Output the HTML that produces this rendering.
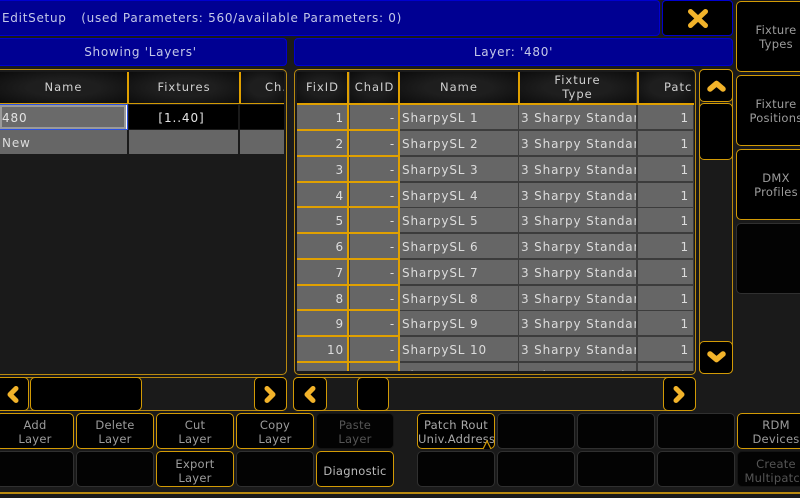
<!DOCTYPE html>
<html><head><meta charset="utf-8">
<style>
html,body{margin:0;padding:0;background:#1a1a1a;}
#p{position:relative;width:800px;height:498px;overflow:hidden;background:#1a1a1a;font-family:"DejaVu Sans",sans-serif;font-size:11.5px;color:#d8d8d8;letter-spacing:.25px;filter:blur(.3px);}
#p div{position:absolute;box-sizing:border-box;}
.blue{background:#000092;border:1px solid #0000d0;border-radius:4px;color:#c4c8e8;text-align:center;font-size:12px;letter-spacing:.72px;}
.pan{border:1px solid #b98a10;border-radius:5px;background:#1a1a1a;}
.btn{background:#000;border:1px solid #d29a05;border-radius:5px;text-align:center;color:#9c9c9c;line-height:14px;white-space:nowrap;overflow:hidden;display:flex;flex-direction:column;justify-content:center;}
.off{border-color:#303030;color:#555;background:#030303;}
.r1{padding-top:2px;}
.r2{padding-top:4px;}
.hd{background:radial-gradient(ellipse at center,#1e1e1e 40%,#0c0c0c 100%);text-align:center;color:#d0d0d0;line-height:13.5px;letter-spacing:1px;display:flex;flex-direction:column;justify-content:center;overflow:hidden;white-space:nowrap;}
.c{background:#666;color:#dcdcdc;height:24px;line-height:26px;white-space:nowrap;overflow:hidden;font-size:12px;letter-spacing:.85px;}
.n{text-align:right;padding-right:4px;}
.t{padding-left:2px;}
.y{background:#e0a000;}
svg{position:absolute;}
</style></head><body><div id="p">

<div class="blue" style="left:-6px;top:0;width:666px;height:36px;text-align:left;padding-left:7px;line-height:35px;white-space:pre;">EditSetup &nbsp;&nbsp;<span style="margin-left:1px">(used Parameters: 560/available Parameters: 0)</span></div>
<div class="blue" style="left:662px;top:0;width:71px;height:36px;background:#000;"></div>
<svg style="left:686px;top:7px" width="24" height="22" viewBox="0 0 24 22"><path d="M4.5 4.5L19.5 18.5M19.5 4.5L4.5 18.5" stroke="#f2b32a" stroke-width="5" stroke-linecap="round" fill="none"/></svg>

<div class="blue" style="left:-6px;top:38px;width:293px;height:28px;line-height:27px;">Showing 'Layers'</div>
<div class="blue" style="left:294px;top:38px;width:439px;height:28px;line-height:27px;">Layer: '480'</div>

<div class="btn" style="left:736px;top:1px;width:80px;height:71px;">Fixture<br>Types</div>
<div class="btn" style="left:736px;top:75px;width:80px;height:71px;">Fixture<br>Positions</div>
<div class="btn" style="left:736px;top:149px;width:80px;height:71px;">DMX<br>Profiles</div>
<div class="btn off" style="left:736px;top:223px;width:80px;height:71px;"></div>

<!-- left panel -->
<div class="pan" style="left:-6px;top:69px;width:293px;height:306px;"></div>
<div class="hd" style="left:0;top:72px;width:127px;height:31px;">Name</div>
<div class="y" style="left:127px;top:72px;width:2px;height:31px;"></div>
<div class="hd" style="left:129px;top:72px;width:110px;height:31px;">Fixtures</div>
<div class="y" style="left:239px;top:72px;width:2px;height:31px;"></div>
<div class="hd" style="left:241px;top:72px;width:43px;height:31px;padding-left:24px;align-items:flex-start;">Ch.</div>
<div class="y" style="left:0;top:103px;width:284px;height:1px;background:#d29a05;"></div>
<div style="left:0;top:104px;width:128px;height:26px;background:#fff;border:1px solid #2a50e0;border-left:none;"></div>
<div style="left:0;top:105px;width:126px;height:24px;background:#9a9a9a;"></div>
<div style="left:2px;top:107px;width:122px;height:20px;background:#6a6a6a;color:#e4e4e4;line-height:22px;font-size:12px;letter-spacing:.85px;">480</div>
<div style="left:129px;top:105px;width:109px;height:24px;background:#000;text-align:center;line-height:26px;color:#e4e4e4;font-size:12px;letter-spacing:.9px;padding-right:4px;">[1..40]</div>
<div style="left:240px;top:105px;width:44px;height:24px;background:#000;"></div>
<div class="c" style="left:0;top:130px;width:127px;padding-left:2px;">New</div>
<div class="c" style="left:129px;top:130px;width:109px;"></div>
<div class="c" style="left:240px;top:130px;width:44px;"></div>

<!-- right panel -->
<div class="pan" style="left:294px;top:69px;width:402px;height:306px;"></div>
<div style="left:297px;top:72px;width:397px;height:299px;overflow:hidden;background:#3c3c3c;">
<div class="hd" style="left:0;top:0;width:51px;height:31px;">FixID</div>
<div class="hd" style="left:53px;top:0;width:49px;height:31px;">ChaID</div>
<div class="hd" style="left:103px;top:0;width:118px;height:31px;">Name</div>
<div class="hd" style="left:222px;top:0;width:117px;height:31px;">Fixture<br>Type</div>
<div class="hd" style="left:341px;top:0;width:56px;height:31px;padding-left:26px;align-items:flex-start;">Patc</div>

<div class="c n" style="left:0;top:33px;width:51px;">1</div><div class="c n" style="left:53px;top:33px;width:49px;">-</div><div class="c t" style="left:103px;top:33px;width:118px;">SharpySL 1</div><div class="c t" style="left:222px;top:33px;width:117px;">3 Sharpy Standard</div><div class="c n" style="left:341px;top:33px;width:55px;">1</div>
<div class="c n" style="left:0;top:59px;width:51px;">2</div><div class="c n" style="left:53px;top:59px;width:49px;">-</div><div class="c t" style="left:103px;top:59px;width:118px;">SharpySL 2</div><div class="c t" style="left:222px;top:59px;width:117px;">3 Sharpy Standard</div><div class="c n" style="left:341px;top:59px;width:55px;">1</div>
<div class="c n" style="left:0;top:85px;width:51px;">3</div><div class="c n" style="left:53px;top:85px;width:49px;">-</div><div class="c t" style="left:103px;top:85px;width:118px;">SharpySL 3</div><div class="c t" style="left:222px;top:85px;width:117px;">3 Sharpy Standard</div><div class="c n" style="left:341px;top:85px;width:55px;">1</div>
<div class="c n" style="left:0;top:111px;width:51px;">4</div><div class="c n" style="left:53px;top:111px;width:49px;">-</div><div class="c t" style="left:103px;top:111px;width:118px;">SharpySL 4</div><div class="c t" style="left:222px;top:111px;width:117px;">3 Sharpy Standard</div><div class="c n" style="left:341px;top:111px;width:55px;">1</div>
<div class="c n" style="left:0;top:136px;width:51px;">5</div><div class="c n" style="left:53px;top:136px;width:49px;">-</div><div class="c t" style="left:103px;top:136px;width:118px;">SharpySL 5</div><div class="c t" style="left:222px;top:136px;width:117px;">3 Sharpy Standard</div><div class="c n" style="left:341px;top:136px;width:55px;">1</div>
<div class="c n" style="left:0;top:162px;width:51px;">6</div><div class="c n" style="left:53px;top:162px;width:49px;">-</div><div class="c t" style="left:103px;top:162px;width:118px;">SharpySL 6</div><div class="c t" style="left:222px;top:162px;width:117px;">3 Sharpy Standard</div><div class="c n" style="left:341px;top:162px;width:55px;">1</div>
<div class="c n" style="left:0;top:188px;width:51px;">7</div><div class="c n" style="left:53px;top:188px;width:49px;">-</div><div class="c t" style="left:103px;top:188px;width:118px;">SharpySL 7</div><div class="c t" style="left:222px;top:188px;width:117px;">3 Sharpy Standard</div><div class="c n" style="left:341px;top:188px;width:55px;">1</div>
<div class="c n" style="left:0;top:214px;width:51px;">8</div><div class="c n" style="left:53px;top:214px;width:49px;">-</div><div class="c t" style="left:103px;top:214px;width:118px;">SharpySL 8</div><div class="c t" style="left:222px;top:214px;width:117px;">3 Sharpy Standard</div><div class="c n" style="left:341px;top:214px;width:55px;">1</div>
<div class="c n" style="left:0;top:239px;width:51px;">9</div><div class="c n" style="left:53px;top:239px;width:49px;">-</div><div class="c t" style="left:103px;top:239px;width:118px;">SharpySL 9</div><div class="c t" style="left:222px;top:239px;width:117px;">3 Sharpy Standard</div><div class="c n" style="left:341px;top:239px;width:55px;">1</div>
<div class="c n" style="left:0;top:265px;width:51px;">10</div><div class="c n" style="left:53px;top:265px;width:49px;">-</div><div class="c t" style="left:103px;top:265px;width:118px;">SharpySL 10</div><div class="c t" style="left:222px;top:265px;width:117px;">3 Sharpy Standard</div><div class="c n" style="left:341px;top:265px;width:55px;">1</div>
<div class="c n" style="left:0;top:291px;width:51px;">11</div><div class="c n" style="left:53px;top:291px;width:49px;">-</div><div class="c t" style="left:103px;top:291px;width:118px;">SharpySL 11</div><div class="c t" style="left:222px;top:291px;width:117px;">3 Sharpy Standard</div><div class="c n" style="left:341px;top:291px;width:55px;">1</div>

<!-- yellow grid -->
<div class="y" style="left:50px;top:0;width:2px;height:300px;"></div>
<div class="y" style="left:101px;top:0;width:2px;height:300px;"></div>
<div class="y" style="left:221px;top:0;width:2px;height:31px;"></div>
<div class="y" style="left:340px;top:0;width:2px;height:31px;"></div>
<div class="y" style="left:0;top:31px;width:397px;height:2px;"></div>
<div class="y" style="left:0;top:57px;width:102px;height:2px;"></div>
<div class="y" style="left:0;top:83px;width:102px;height:2px;"></div>
<div class="y" style="left:0;top:109px;width:102px;height:2px;"></div>
<div class="y" style="left:0;top:134px;width:102px;height:2px;"></div>
<div class="y" style="left:0;top:160px;width:102px;height:2px;"></div>
<div class="y" style="left:0;top:186px;width:102px;height:2px;"></div>
<div class="y" style="left:0;top:212px;width:102px;height:2px;"></div>
<div class="y" style="left:0;top:237px;width:102px;height:2px;"></div>
<div class="y" style="left:0;top:263px;width:102px;height:2px;"></div>
<div class="y" style="left:0;top:289px;width:102px;height:2px;"></div>
</div>

<!-- vertical scrollbar -->
<div class="pan" style="left:699px;top:69px;width:34px;height:305px;"></div>
<div class="btn" style="left:699px;top:69px;width:34px;height:33px;"></div>
<div class="btn" style="left:699px;top:103px;width:34px;height:57px;"></div>
<div class="btn" style="left:699px;top:341px;width:34px;height:33px;"></div>
<svg style="left:705px;top:78px" width="22" height="16" viewBox="0 0 22 16"><path d="M5 11L11.5 5.5L18 11" stroke="#f2b32a" stroke-width="5.5" stroke-linecap="round" stroke-linejoin="round" fill="none"/></svg>
<svg style="left:705px;top:349px" width="22" height="16" viewBox="0 0 22 16"><path d="M5 5L11.5 10.5L18 5" stroke="#f2b32a" stroke-width="5.5" stroke-linecap="round" stroke-linejoin="round" fill="none"/></svg>

<!-- horizontal scrollbars -->
<div class="pan" style="left:-6px;top:377px;width:293px;height:34px;"></div>
<div class="btn" style="left:-6px;top:377px;width:35px;height:34px;"></div>
<div class="btn" style="left:30px;top:377px;width:112px;height:34px;"></div>
<div class="btn" style="left:254px;top:377px;width:33px;height:34px;"></div>
<svg style="left:5px;top:384px" width="16" height="22" viewBox="0 0 16 22"><path d="M11 4.5L5 10.5L11 16.5" stroke="#f2b32a" stroke-width="5" stroke-linecap="round" stroke-linejoin="round" fill="none"/></svg>
<svg style="left:262px;top:384px" width="16" height="22" viewBox="0 0 16 22"><path d="M5 4.5L11 10.5L5 16.5" stroke="#f2b32a" stroke-width="5" stroke-linecap="round" stroke-linejoin="round" fill="none"/></svg>

<div class="pan" style="left:293px;top:377px;width:403px;height:34px;"></div>
<div class="btn" style="left:293px;top:377px;width:34px;height:34px;"></div>
<div class="btn" style="left:357px;top:377px;width:32px;height:34px;"></div>
<div class="btn" style="left:663px;top:377px;width:33px;height:34px;"></div>
<svg style="left:302px;top:384px" width="16" height="22" viewBox="0 0 16 22"><path d="M11 4.5L5 10.5L11 16.5" stroke="#f2b32a" stroke-width="5" stroke-linecap="round" stroke-linejoin="round" fill="none"/></svg>
<svg style="left:671px;top:384px" width="16" height="22" viewBox="0 0 16 22"><path d="M5 4.5L11 10.5L5 16.5" stroke="#f2b32a" stroke-width="5" stroke-linecap="round" stroke-linejoin="round" fill="none"/></svg>

<!-- bottom buttons row 1 -->
<div class="btn r1" style="left:-4px;top:413px;width:78px;height:36px;">Add<br>Layer</div>
<div class="btn r1" style="left:76px;top:413px;width:78px;height:36px;">Delete<br>Layer</div>
<div class="btn r1" style="left:156px;top:413px;width:78px;height:36px;">Cut<br>Layer</div>
<div class="btn r1" style="left:236px;top:413px;width:78px;height:36px;">Copy<br>Layer</div>
<div class="btn off r1" style="left:316px;top:413px;width:78px;height:36px;border-color:#141414;">Paste<br>Layer</div>
<div class="btn r1" style="left:417px;top:413px;width:78px;height:36px;color:#a8a8a8;">Patch Rout<br>Univ.Address</div>
<div class="btn off" style="left:497px;top:413px;width:78px;height:36px;"></div>
<div class="btn off" style="left:577px;top:413px;width:78px;height:36px;"></div>
<div class="btn off" style="left:657px;top:413px;width:78px;height:36px;"></div>
<div class="btn r1" style="left:737px;top:413px;width:78px;height:36px;">RDM<br>Devices</div>
<svg style="left:482px;top:439px" width="14" height="11" viewBox="0 0 14 11"><path d="M1 10L5 2L9 10" stroke="#d29a05" stroke-width="1.2" fill="#000"/></svg>

<!-- bottom buttons row 2 -->
<div class="btn off" style="left:-4px;top:451px;width:78px;height:36px;"></div>
<div class="btn off" style="left:76px;top:451px;width:78px;height:36px;"></div>
<div class="btn r2" style="left:156px;top:451px;width:78px;height:36px;">Export<br>Layer</div>
<div class="btn off" style="left:236px;top:451px;width:78px;height:36px;"></div>
<div class="btn r2" style="left:316px;top:451px;width:78px;height:36px;color:#b8b8b8;">Diagnostic</div>
<div class="btn off" style="left:417px;top:451px;width:78px;height:36px;"></div>
<div class="btn off" style="left:497px;top:451px;width:78px;height:36px;"></div>
<div class="btn off" style="left:577px;top:451px;width:78px;height:36px;"></div>
<div class="btn off" style="left:657px;top:451px;width:78px;height:36px;"></div>
<div class="btn off r2" style="left:737px;top:451px;width:78px;height:36px;border-color:#141414;">Create<br>Multipatch</div>

<div style="left:0;top:492px;width:800px;height:2px;background:#b98a10;"></div>
</div></body></html>
